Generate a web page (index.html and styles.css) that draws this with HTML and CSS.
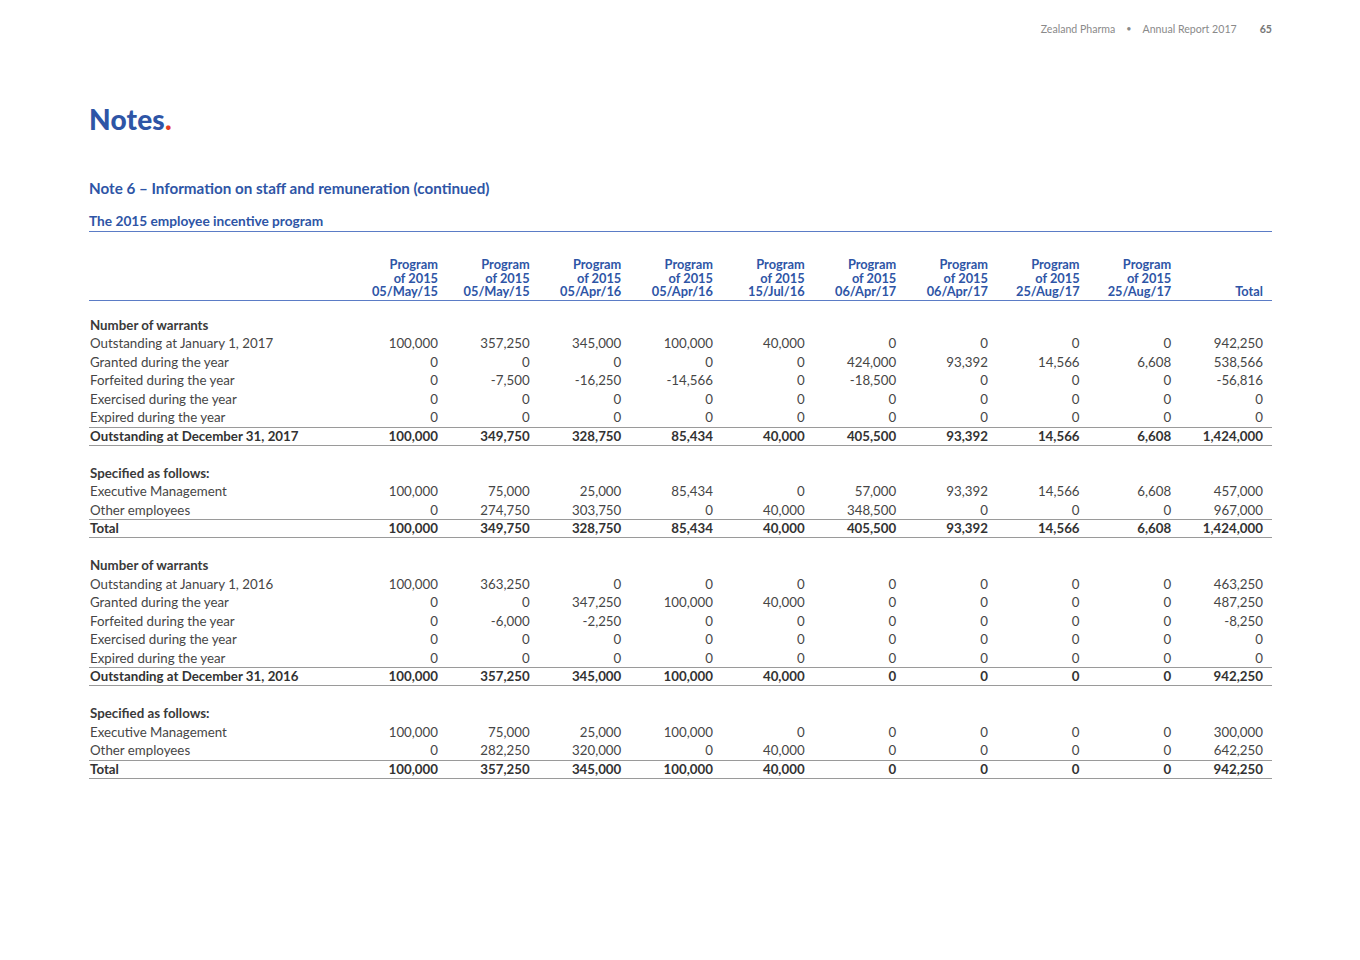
FILE: index.html
```html
<!DOCTYPE html>
<html lang="en">
<head>
<meta charset="utf-8">
<title>Notes</title>
<link rel="stylesheet" href="styles.css">
</head>
<body>
<div class="page">
  <div class="runhead">
    <span>Zealand Pharma</span><span class="bullet">•</span><span>Annual Report 2017</span><span class="pageno">65</span>
  </div>
  <h1 class="title">Notes<span class="dot">.</span></h1>
  <h2 class="note">Note 6 – Information on staff and remuneration (continued)</h2>
  <h3 class="sub">The 2015 employee incentive program</h3>
  <table class="tbl">
    <colgroup>
      <col class="c-label">
      <col class="c-num"><col class="c-num"><col class="c-num"><col class="c-num"><col class="c-num">
      <col class="c-num"><col class="c-num"><col class="c-num"><col class="c-num"><col class="c-num">
    </colgroup>
    <thead>
      <tr>
        <th></th>
        <th>Program<br>of 2015<br>05/May/15</th>
        <th>Program<br>of 2015<br>05/May/15</th>
        <th>Program<br>of 2015<br>05/Apr/16</th>
        <th>Program<br>of 2015<br>05/Apr/16</th>
        <th>Program<br>of 2015<br>15/Jul/16</th>
        <th>Program<br>of 2015<br>06/Apr/17</th>
        <th>Program<br>of 2015<br>06/Apr/17</th>
        <th>Program<br>of 2015<br>25/Aug/17</th>
        <th>Program<br>of 2015<br>25/Aug/17</th>
        <th>Total</th>
      </tr>
    </thead>
    <tbody>
      <tr class="gap first"><td colspan="11"></td></tr>
      <tr class="sec"><td colspan="11">Number of warrants</td></tr>
      <tr><td>Outstanding at January 1, 2017</td><td>100,000</td><td>357,250</td><td>345,000</td><td>100,000</td><td>40,000</td><td>0</td><td>0</td><td>0</td><td>0</td><td>942,250</td></tr>
      <tr><td>Granted during the year</td><td>0</td><td>0</td><td>0</td><td>0</td><td>0</td><td>424,000</td><td>93,392</td><td>14,566</td><td>6,608</td><td>538,566</td></tr>
      <tr><td>Forfeited during the year</td><td>0</td><td>-7,500</td><td>-16,250</td><td>-14,566</td><td>0</td><td>-18,500</td><td>0</td><td>0</td><td>0</td><td>-56,816</td></tr>
      <tr><td>Exercised during the year</td><td>0</td><td>0</td><td>0</td><td>0</td><td>0</td><td>0</td><td>0</td><td>0</td><td>0</td><td>0</td></tr>
      <tr><td>Expired during the year</td><td>0</td><td>0</td><td>0</td><td>0</td><td>0</td><td>0</td><td>0</td><td>0</td><td>0</td><td>0</td></tr>
      <tr class="total"><td>Outstanding at December 31, 2017</td><td>100,000</td><td>349,750</td><td>328,750</td><td>85,434</td><td>40,000</td><td>405,500</td><td>93,392</td><td>14,566</td><td>6,608</td><td>1,424,000</td></tr>

      <tr class="gap"><td colspan="11"></td></tr>
      <tr class="sec"><td colspan="11">Specified as follows:</td></tr>
      <tr><td>Executive Management</td><td>100,000</td><td>75,000</td><td>25,000</td><td>85,434</td><td>0</td><td>57,000</td><td>93,392</td><td>14,566</td><td>6,608</td><td>457,000</td></tr>
      <tr><td>Other employees</td><td>0</td><td>274,750</td><td>303,750</td><td>0</td><td>40,000</td><td>348,500</td><td>0</td><td>0</td><td>0</td><td>967,000</td></tr>
      <tr class="total"><td>Total</td><td>100,000</td><td>349,750</td><td>328,750</td><td>85,434</td><td>40,000</td><td>405,500</td><td>93,392</td><td>14,566</td><td>6,608</td><td>1,424,000</td></tr>

      <tr class="gap"><td colspan="11"></td></tr>
      <tr class="sec"><td colspan="11">Number of warrants</td></tr>
      <tr><td>Outstanding at January 1, 2016</td><td>100,000</td><td>363,250</td><td>0</td><td>0</td><td>0</td><td>0</td><td>0</td><td>0</td><td>0</td><td>463,250</td></tr>
      <tr><td>Granted during the year</td><td>0</td><td>0</td><td>347,250</td><td>100,000</td><td>40,000</td><td>0</td><td>0</td><td>0</td><td>0</td><td>487,250</td></tr>
      <tr><td>Forfeited during the year</td><td>0</td><td>-6,000</td><td>-2,250</td><td>0</td><td>0</td><td>0</td><td>0</td><td>0</td><td>0</td><td>-8,250</td></tr>
      <tr><td>Exercised during the year</td><td>0</td><td>0</td><td>0</td><td>0</td><td>0</td><td>0</td><td>0</td><td>0</td><td>0</td><td>0</td></tr>
      <tr><td>Expired during the year</td><td>0</td><td>0</td><td>0</td><td>0</td><td>0</td><td>0</td><td>0</td><td>0</td><td>0</td><td>0</td></tr>
      <tr class="total"><td>Outstanding at December 31, 2016</td><td>100,000</td><td>357,250</td><td>345,000</td><td>100,000</td><td>40,000</td><td>0</td><td>0</td><td>0</td><td>0</td><td>942,250</td></tr>

      <tr class="gap"><td colspan="11"></td></tr>
      <tr class="sec"><td colspan="11">Specified as follows:</td></tr>
      <tr><td>Executive Management</td><td>100,000</td><td>75,000</td><td>25,000</td><td>100,000</td><td>0</td><td>0</td><td>0</td><td>0</td><td>0</td><td>300,000</td></tr>
      <tr><td>Other employees</td><td>0</td><td>282,250</td><td>320,000</td><td>0</td><td>40,000</td><td>0</td><td>0</td><td>0</td><td>0</td><td>642,250</td></tr>
      <tr class="total"><td>Total</td><td>100,000</td><td>357,250</td><td>345,000</td><td>100,000</td><td>40,000</td><td>0</td><td>0</td><td>0</td><td>0</td><td>942,250</td></tr>
    </tbody>
  </table>
</div>
</body>
</html>
```
FILE: styles.css
```css
* { box-sizing: border-box; }
html, body { margin: 0; padding: 0; background: #ffffff; }
body {
  font-family: Lato, "Open Sans", "Liberation Sans", sans-serif;
  color: #464646;
}
.page {
  width: 1360px;
  padding: 22px 88px 0 89px;
}
.runhead {
  display: flex;
  justify-content: flex-end;
  align-items: center;
  font-size: 10.6px;
  line-height: 14px;
  color: #8a8a8a;
}
.runhead .bullet { margin: 0 11px 0 11px; font-size: 9px; }
.runhead .pageno { margin-left: 23px; font-weight: 700; color: #777; }
.title {
  margin: 66px 0 0 0;
  font-size: 28px;
  line-height: 34px;
  font-weight: 900;
  color: #2e55a6;
  letter-spacing: 0.2px;
}
.title .dot { color: #e63d24; }
.note {
  margin: 43px 0 0 0;
  font-size: 15.2px;
  line-height: 18px;
  font-weight: 700;
  color: #2e55a6;
}
.sub {
  margin: 16px 0 0 0;
  font-size: 13.7px;
  line-height: 16px;
  font-weight: 700;
  color: #2e55a6;
  padding-bottom: 2px;
  border-bottom: 1.5px solid #5b7cc6;
}
.tbl {
  width: 1183px;
  border-collapse: collapse;
  table-layout: fixed;
  margin-top: 26px;
  font-size: 13.3px;
}
.c-label { width: 266.3px; }
.c-num { width: 91.67px; }
.tbl th {
  font-weight: 700;
  color: #2e55a6;
  font-size: 12.8px;
  line-height: 13.5px;
  text-align: right;
  vertical-align: bottom;
  padding: 0 9px 1px 0;
  border-bottom: 1.5px solid #5b7cc6;
}
.tbl td {
  height: 18.44px;
  line-height: 18.44px;
  padding: 0 9px 0 0;
  text-align: right;
  white-space: nowrap;
}
.tbl td:first-child { text-align: left; padding-left: 1px; }
.tbl tr.gap td { height: 18.44px; }
.tbl tr.gap.first td { height: 16px; }
.tbl tr.sec td { font-weight: 700; color: #3a3a3a; text-align: left; }
.tbl tr.total td {
  height: 17.3px;
  line-height: 17.3px;
  font-weight: 700;
  color: #333;
  border-top: 1px solid #9a9a9a;
  border-bottom: 1px solid #9a9a9a;
}
```
